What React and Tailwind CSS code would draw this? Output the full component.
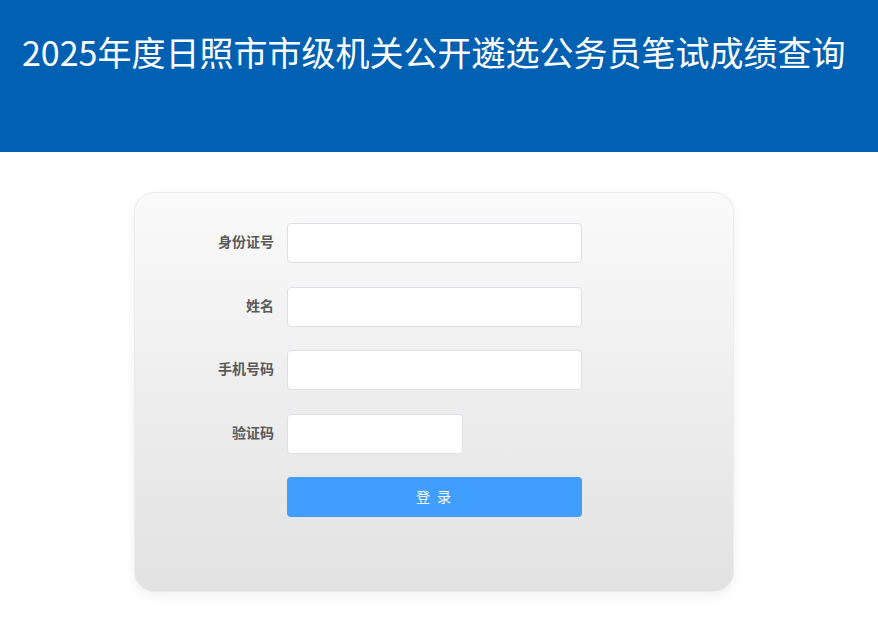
export default function App() {
  const font = { fontFamily: '"Noto Sans CJK SC", "Noto Sans", sans-serif' };
  const rows = [
    { label: '身份证号', w: 'w-[295px]' },
    { label: '姓名', w: 'w-[295px]' },
    { label: '手机号码', w: 'w-[295px]' },
    { label: '验证码', w: 'w-[176px]' },
  ];
  return (
    <div className="w-[878px] h-[628px] bg-white overflow-hidden" style={font}>
      <div className="h-[152px] bg-[#0060b1] pl-[22px] pt-[26px]">
        <h1 className="text-[34px] leading-[52px] text-white font-normal whitespace-nowrap">
          2025年度日照市市级机关公开遴选公务员笔试成绩查询
        </h1>
      </div>
      <div className="pt-[40px] pl-[134px]">
        <div className="w-[600px] h-[400px] rounded-[20px] border border-[#ebebf0] bg-gradient-to-b from-[#fafafa] to-[#e2e2e2] shadow-[0_4px_12px_rgba(0,0,0,0.06)] pt-[30px]">
          <div className="flex flex-col gap-[23.5px]">
            {rows.map((r) => (
              <div key={r.label} className="flex items-center h-[40px]">
                <div className="w-[152px] text-right pr-[13px] text-[14px] leading-[20px] font-bold text-[#5a5a5a] -mt-[4px]">
                  {r.label}
                </div>
                <div className={`${r.w} h-[40px] bg-white border border-[#dcdfe6] rounded-[4px]`} />
              </div>
            ))}
          </div>
          <div className="pl-[152px] mt-[23px]">
            <div className="w-[295px] h-[40px] bg-[#409eff] rounded-[4px] flex items-center justify-center text-white text-[14px] tracking-[2px]">
              登 录
            </div>
          </div>
        </div>
      </div>
    </div>
  );
}
